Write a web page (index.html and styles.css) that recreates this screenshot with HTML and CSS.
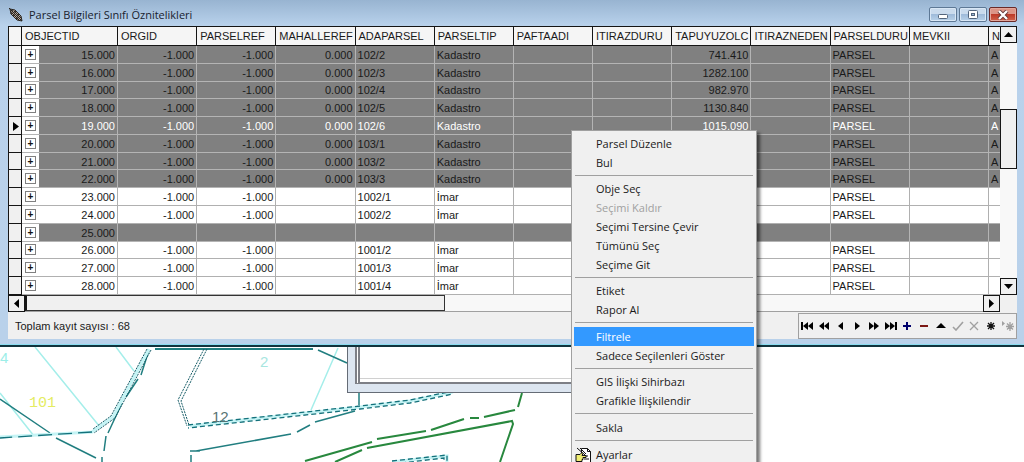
FILE: index.html
```html
<!DOCTYPE html>
<html lang="tr">
<head>
<meta charset="utf-8">
<title>Parsel Bilgileri Sınıfı Öznitelikleri</title>
<link rel="stylesheet" href="styles.css">
</head>
<body>
<main class="window">
  <header class="titlebar">
    <svg class="app-icon" width="16" height="16" viewBox="0 0 16 16" fill="none" stroke="#282420"><path d="M2 2l5 1 6 6 1 5-5-1-6-6z" fill="#b9a99a"/><path d="M1 1l13 13M5 3l-2 4M8 4L5 9M11 7l-3 5M4 6l7 7M6 4l7 7"/></svg>
    <h1>Parsel Bilgileri Sınıfı Öznitelikleri</h1>
    <div class="caption">
      <button class="cap" aria-label="Simge durumuna küçült"><svg width="12" height="10" viewBox="0 0 12 10"><rect x="1.500" y="4.500" width="9" height="4" rx="1" fill="#fff" stroke="#53657c"/></svg></button>
      <button class="cap" aria-label="Ekranı kapla"><svg width="12" height="10" viewBox="0 0 12 10"><rect x="1.500" y=".5" width="9" height="8" rx="1" fill="#fff" stroke="#53657c"/><rect x="4.500" y="3.500" width="3" height="2" fill="#9eb9d6" stroke="#53657c"/></svg></button>
      <button class="cap close" aria-label="Kapat"><svg width="12" height="10" viewBox="0 0 12 10"><path d="M2 1l8 8M10 1l-8 8" stroke="#5e3535" stroke-width="4"/><path d="M2 1l8 8M10 1l-8 8" stroke="#fff" stroke-width="2.400"/></svg></button>
    </div>
  </header>

  <div class="grid-area">
    <div class="table-view">
      <table>
        <colgroup><col class="c-mark"><col class="c-plus"><col class="c-id"><col><col><col><col><col><col><col><col><col><col><col><col class="c-last"></colgroup>
        <thead><tr><th></th><th colspan="2">OBJECTID</th><th>ORGID</th><th>PARSELREF</th><th>MAHALLEREF</th><th>ADAPARSEL</th><th>PARSELTIP</th><th>PAFTAADI</th><th>ITIRAZDURU</th><th>TAPUYUZOLC</th><th>ITIRAZNEDEN</th><th>PARSELDURU</th><th>MEVKII</th><th>N</th></tr></thead>
        <tbody>
          <tr class="sel"><th></th><td class="x"><button>+</button></td><td class="n">15.000</td><td class="n">-1.000</td><td class="n">-1.000</td><td class="n">0.000</td><td>102/2</td><td>Kadastro</td><td></td><td></td><td class="n">741.410</td><td></td><td>PARSEL</td><td></td><td>A</td></tr>
          <tr class="sel"><th></th><td class="x"><button>+</button></td><td class="n">16.000</td><td class="n">-1.000</td><td class="n">-1.000</td><td class="n">0.000</td><td>102/3</td><td>Kadastro</td><td></td><td></td><td class="n">1282.100</td><td></td><td>PARSEL</td><td></td><td>A</td></tr>
          <tr class="sel"><th></th><td class="x"><button>+</button></td><td class="n">17.000</td><td class="n">-1.000</td><td class="n">-1.000</td><td class="n">0.000</td><td>102/4</td><td>Kadastro</td><td></td><td></td><td class="n">982.970</td><td></td><td>PARSEL</td><td></td><td>A</td></tr>
          <tr class="sel"><th></th><td class="x"><button>+</button></td><td class="n">18.000</td><td class="n">-1.000</td><td class="n">-1.000</td><td class="n">0.000</td><td>102/5</td><td>Kadastro</td><td></td><td></td><td class="n">1130.840</td><td></td><td>PARSEL</td><td></td><td>A</td></tr>
          <tr class="sel current"><th><svg width="6" height="9" viewBox="0 0 6 9"><path d="M0 0l6 4.500-6 4.500z"/></svg></th><td class="x"><button>+</button></td><td class="n">19.000</td><td class="n">-1.000</td><td class="n">-1.000</td><td class="n">0.000</td><td>102/6</td><td>Kadastro</td><td></td><td></td><td class="n">1015.090</td><td></td><td>PARSEL</td><td></td><td>A</td></tr>
          <tr class="sel"><th></th><td class="x"><button>+</button></td><td class="n">20.000</td><td class="n">-1.000</td><td class="n">-1.000</td><td class="n">0.000</td><td>103/1</td><td>Kadastro</td><td></td><td></td><td></td><td></td><td>PARSEL</td><td></td><td>A</td></tr>
          <tr class="sel"><th></th><td class="x"><button>+</button></td><td class="n">21.000</td><td class="n">-1.000</td><td class="n">-1.000</td><td class="n">0.000</td><td>103/2</td><td>Kadastro</td><td></td><td></td><td></td><td></td><td>PARSEL</td><td></td><td>A</td></tr>
          <tr class="sel"><th></th><td class="x"><button>+</button></td><td class="n">22.000</td><td class="n">-1.000</td><td class="n">-1.000</td><td class="n">0.000</td><td>103/3</td><td>Kadastro</td><td></td><td></td><td></td><td></td><td>PARSEL</td><td></td><td>A</td></tr>
          <tr><th></th><td class="x"><button>+</button></td><td class="n">23.000</td><td class="n">-1.000</td><td class="n">-1.000</td><td></td><td>1002/1</td><td>İmar</td><td></td><td></td><td></td><td></td><td>PARSEL</td><td></td><td></td></tr>
          <tr><th></th><td class="x"><button>+</button></td><td class="n">24.000</td><td class="n">-1.000</td><td class="n">-1.000</td><td></td><td>1002/2</td><td>İmar</td><td></td><td></td><td></td><td></td><td>PARSEL</td><td></td><td></td></tr>
          <tr class="sel"><th></th><td class="x"><button>+</button></td><td class="n">25.000</td><td></td><td></td><td></td><td></td><td></td><td></td><td></td><td></td><td></td><td></td><td></td><td></td></tr>
          <tr><th></th><td class="x"><button>+</button></td><td class="n">26.000</td><td class="n">-1.000</td><td class="n">-1.000</td><td></td><td>1001/2</td><td>İmar</td><td></td><td></td><td></td><td></td><td>PARSEL</td><td></td><td></td></tr>
          <tr><th></th><td class="x"><button>+</button></td><td class="n">27.000</td><td class="n">-1.000</td><td class="n">-1.000</td><td></td><td>1001/3</td><td>İmar</td><td></td><td></td><td></td><td></td><td>PARSEL</td><td></td><td></td></tr>
          <tr><th></th><td class="x"><button>+</button></td><td class="n">28.000</td><td class="n">-1.000</td><td class="n">-1.000</td><td></td><td>1001/4</td><td>İmar</td><td></td><td></td><td></td><td></td><td>PARSEL</td><td></td><td></td></tr>
        </tbody>
      </table>
    </div>
    <div class="vscroll">
      <button class="arrow" aria-label="Yukarı"><svg width="9" height="5" viewBox="0 0 9 5"><path d="M0 5l4.500-5L9 5z"/></svg></button>
      <div class="vtrack-before"></div>
      <div class="vthumb"></div>
      <div class="vtrack-after"></div>
      <button class="arrow" aria-label="Aşağı"><svg width="9" height="5" viewBox="0 0 9 5"><path d="M0 0l4.500 5L9 0z"/></svg></button>
    </div>
    <div class="hscroll">
      <button class="arrow left" aria-label="Sola"><svg width="5" height="9" viewBox="0 0 5 9"><path d="M5 0L0 4.500 5 9z"/></svg></button>
      <div class="hthumb"></div>
      <div class="htrack"></div>
      <button class="arrow" aria-label="Sağa"><svg width="5" height="9" viewBox="0 0 5 9"><path d="M0 0l5 4.500L0 9z"/></svg></button>
    </div>
  </div>

  <footer class="status">
    <span>Toplam kayıt sayısı : 68</span>
    <div class="navigator">
      <button aria-label="İlk"><svg width="12" height="10" viewBox="0 0 12 10"><path d="M0 1h2v8H0zM7 1v8L2 5zM12 1v8L7 5z"/></svg></button>
      <button aria-label="Önceki sayfa"><svg width="12" height="10" viewBox="0 0 12 10"><path d="M6 1v8L1 5zM11 1v8L6 5z"/></svg></button>
      <button aria-label="Önceki"><svg width="12" height="10" viewBox="0 0 12 10"><path d="M8 1v8L3 5z"/></svg></button>
      <button aria-label="Sonraki"><svg width="12" height="10" viewBox="0 0 12 10"><path d="M4 1v8l5-4z"/></svg></button>
      <button aria-label="Sonraki sayfa"><svg width="12" height="10" viewBox="0 0 12 10"><path d="M1 1v8l5-4zM6 1v8l5-4z"/></svg></button>
      <button aria-label="Son"><svg width="12" height="10" viewBox="0 0 12 10"><path d="M0 1v8l5-4zM5 1v8l5-4zM10 1h2v8h-2z"/></svg></button>
      <button aria-label="Ekle"><svg width="12" height="10" viewBox="0 0 12 10"><path d="M6 1v8M2 5h8" stroke="#00006c" stroke-width="2"/></svg></button>
      <button aria-label="Sil"><svg width="12" height="10" viewBox="0 0 12 10"><path d="M2 5h8" stroke="#7b1713" stroke-width="2"/></svg></button>
      <button aria-label="Düzenle"><svg width="12" height="10" viewBox="0 0 12 10"><path d="M1 7l5-5 5 5z"/></svg></button>
      <button aria-label="Onayla" disabled><svg width="12" height="10" viewBox="0 0 12 10"><path d="M1 6l3 3 7-8" fill="none" stroke="#a0a0a0" stroke-width="1.600"/></svg></button>
      <button aria-label="İptal" disabled><svg width="12" height="10" viewBox="0 0 12 10"><path d="M2 1l8 8M10 1L2 9" fill="none" stroke="#a0a0a0" stroke-width="1.300"/></svg></button>
      <button aria-label="Yer imi"><svg width="12" height="10" viewBox="0 0 12 10"><path d="M6 1v8M2 5h8M3 2l6 6M9 2L3 8" stroke="#111" stroke-width="1.300"/></svg></button>
      <button aria-label="Yer imine git" disabled><svg width="12" height="10" viewBox="0 0 12 10"><path d="M0 0v5l3-2.500z" fill="#a0a0a0"/><path d="M8 1v9M4 5.500h8M5 2.500l6 6M11 2.500l-6 6" stroke="#a0a0a0" stroke-width="1.300"/></svg></button>
    </div>
  </footer>
</main>

<section class="map" aria-label="Harita">
  <svg width="1024" height="115" viewBox="0 347 1024 115" fill="none" stroke-width="1.500">
    <g stroke="#a5eeea">
      <path d="M0 393L34 436M35 347L100 427M116 347l18 24M338 348l-27 62"/>
    </g>
    <g stroke="#217e80">
      <path d="M0 399l50 34M56 438l40 20M318 350l29 13" />
      <path d="M149 350l-8 25M138 379l-12 18M122 403l-14 30M106 436l-2 15M102 457v5"/>
      <path d="M196 451l95-17M297 432l13-7M315 422l40-11M359 393v12M191 462v-7M190 451h10"/>
      <path d="M155 349h158" stroke-width="2"/>
    </g>
    <g stroke="#c4f4f5" stroke-width="3">
      <path d="M149 349l-36 68-21 15-92 5M190 426l170-19 50-6 43-9M392 462l55-6v6"/>
    </g>
    <g stroke="#145b66" stroke-width="1">
      <path stroke-dasharray="2 1" d="M147 349l-36 67-18 13M151 350l-36 68-21 15M204 349l-26 51 9 26M207 349l-26 52 8 24"/>
    </g>
    <g stroke="#14717b" stroke-width="1.300">
      <path stroke-dasharray="14 6" d="M92 432l-92 6"/>
      <path stroke-dasharray="5 3" d="M188 425l172-19 50-6 43-9"/>
      <path stroke-dasharray="5 3" stroke-dashoffset="4" d="M188 428l172-19 50-6 43-9"/>
      <path stroke-dasharray="5 3" d="M392 461l55-6v7M393 464l51-6v4"/>
    </g>
    <g stroke="#28883e" stroke-width="2">
      <path d="M305 461l67-19M377 439l49-8M431 430l33-11M470 418h9M484 417l31-7M518 407l4-14M335 462l27-12M367 448l145-27 1 3-13 38"/>
    </g>
    <g class="map-text">
      <text x="0" y="363" fill="#9ceee8">4</text>
      <text x="260" y="367" fill="#a8e6df">2</text>
      <text class="parcel" x="29" y="407" fill="#e4ec62">101</text>
      <text x="212" y="422" fill="#587373">12</text>
    </g>
  </svg>
  <div class="back-window"><div></div></div>
</section>

<div class="menu" role="menu">
  <button role="menuitem">Parsel Düzenle</button>
  <button role="menuitem">Bul</button>
  <hr>
  <button role="menuitem">Obje Seç</button>
  <button role="menuitem" disabled>Seçimi Kaldır</button>
  <button role="menuitem">Seçimi Tersine Çevir</button>
  <button role="menuitem">Tümünü Seç</button>
  <button role="menuitem">Seçime Git</button>
  <hr>
  <button role="menuitem">Etiket</button>
  <button role="menuitem">Rapor Al</button>
  <hr class="wide">
  <button role="menuitem" class="active">Filtrele</button>
  <button role="menuitem">Sadece Seçilenleri Göster</button>
  <hr>
  <button role="menuitem">GIS İlişki Sihirbazı</button>
  <button role="menuitem">Grafikle İlişkilendir</button>
  <hr class="wide">
  <button role="menuitem">Sakla</button>
  <hr class="wide">
  <button role="menuitem" class="with-icon"><svg width="16" height="16" viewBox="0 0 16 16" fill="none" stroke="#111"><path d="M6.500 1.500h6l3 3v11h-9z" fill="#fff"/><path d="M12.500 1.500v3h3M9 9h4M9 12h5M2 1l8 7M5 1l6 6"/><path d="M1 7.500h4l2-2 1 1-1 2h4v2H8v2H7v2H1z" fill="#efed72"/></svg>Ayarlar</button>
</div>
</body>
</html>
```
FILE: styles.css
```css
* { box-sizing: border-box; }
html, body { height: 100%; }
body {
  margin: 0;
  display: flex;
  flex-direction: column;
  overflow: hidden;
  background: #fff;
  color: #1a1a1a;
  font: 11px/16px "Liberation Sans", Arial, sans-serif;
}
button {
  padding: 0;
  border: 0;
  background: none;
  color: inherit;
  font: inherit;
}
svg { display: block; flex: none; }

.window {
  flex: none;
  padding: 0 7px 6px 8px;
  background: linear-gradient(#98b4d1, #b9d2ec 26px, #b9d1ea);
  border-bottom: 2px solid #10333d;
  box-shadow: inset 0 -1px #8bdcf0;
}
.titlebar {
  display: flex;
  align-items: center;
  height: 26px;
  padding-top: 3px;
}
.titlebar h1 {
  flex: 1;
  margin: 0 0 0 5px;
  color: #18222e;
  font: 11px/16px "Open Sans", "Noto Sans", sans-serif;
}
.caption { display: flex; gap: 2px; }
.cap {
  display: grid;
  place-items: center;
  width: 28px;
  height: 15px;
  border: 1px solid #5d7895;
  border-radius: 2px;
  background: linear-gradient(#cadbed 45%, #9fbbda 50%, #b9d2ea);
  box-shadow: inset 0 0 0 1px #d9e7f5;
}
.close {
  border-color: #6a2a28;
  background: linear-gradient(#dc9587 45%, #bd3a28 50%, #d0644c);
  box-shadow: inset 0 0 0 1px #e3a79c;
}

.grid-area {
  display: grid;
  grid-template-columns: 1fr 17px;
  grid-template-rows: 269px 17px;
  background: #f0f0f0;
}
.table-view { overflow: hidden; border-top: 1px solid #151515; border-left: 1px solid #151515; background: #fff; }
table { width: 100%; height: 268px; table-layout: fixed; border-collapse: separate; border-spacing: 0; }
col { width: 8%; }
.c-mark { width: 13px; }
.c-plus { width: 17px; }
.c-id { width: 79px; }
.c-last { width: 11px; }
th, td {
  padding: 1px 2px 0;
  overflow: hidden;
  text-align: left;
  font-weight: 400;
  line-height: 14px;
  white-space: nowrap;
}
thead th {
  height: 19px;
  padding: 0 0 0 3px;
  background: #f5f5f5;
  border-right: 1px solid #151515;
  border-bottom: 1px solid #151515;
}
thead th:last-child { border-right: 0; }
tbody th { background: #f0f0f0; border-right: 1px solid #151515; border-bottom: 1px solid #151515; }
tbody th svg { margin-left: 2px; }
td { border-right: 1px solid #b0b0b0; border-bottom: 1px solid #b0b0b0; }
td:last-child { border-right: 0; padding-right: 0; }
.sel td { background: #808080; border-color: #b4b4b4; }
.current td { color: #fff; }
.n { text-align: right; }
.x, .sel .x { padding: 0; background: #fff; border-right: 0; color: #111; }
.x button {
  display: grid;
  place-items: center;
  width: 11px;
  height: 11px;
  margin-left: 3px;
  border: 1px solid #808080;
  font: bold 10px/9px "Liberation Sans", sans-serif;
}

.arrow {
  display: grid;
  place-items: center;
  flex: none;
  width: 17px;
  height: 17px;
  border: 1px solid #151515;
  background: #f0f0f0;
}
.vscroll { display: flex; flex-direction: column; background: #f8f8f8; }
.vtrack-before { flex: 67; }
.vthumb { flex: 58; border: 1px solid #151515; background: #f0f0f0; }
.vtrack-after { flex: 110; }
.hscroll { display: flex; background: #f8f8f8; border-bottom: 1px solid #a0a0a0; }
.hthumb { flex: 419; border: 1px solid #333; border-left: 2px solid #151515; background: #f0f0f0; }
.htrack { flex: 540; }

.status {
  display: flex;
  align-items: center;
  justify-content: space-between;
  height: 27px;
  padding: 1px 0 0 7px;
  background: #f0f0f0;
}
.navigator {
  display: grid;
  grid-template-columns: repeat(13, 1fr);
  width: 219px;
  height: 26px;
  border: 1px solid #a0a0a0;
}
.navigator button { display: grid; place-items: center; }

.map { position: relative; flex: 1; overflow: hidden; }
.map-text { font: 15px "Liberation Sans", sans-serif; stroke: none; }
.parcel { font-family: "Liberation Mono", monospace; }
.back-window {
  position: absolute;
  top: 0;
  left: 347px;
  width: 360px;
  height: 46px;
  padding: 0 7px 8px;
  background: #dce5f0;
  border: 1px solid #656c76;
  border-top: 0;
}
.back-window div {
  height: 100%;
  background: #fff;
  border: solid #7d7f86;
  border-width: 0 0 2px 5px;
  border-left-style: double;
  box-shadow: inset 0 -3px #fff, inset 0 -4px #d0d0d0;
}

.menu {
  position: absolute;
  top: 130px;
  left: 571px;
  width: 186px;
  padding: 3px 2px;
  background: #f0f0f0;
  border: 1px solid #a0a0a0;
  box-shadow: 3px 3px 3px #0008;
  font: 11px/19px "Open Sans", "Noto Sans", sans-serif;
}
.menu button {
  display: flex;
  align-items: center;
  width: 100%;
  height: 19px;
  padding-left: 22px;
  white-space: nowrap;
}
.menu button:disabled { color: #a0a0a0; }
.menu .active { background: #3399ff; color: #fff; }
.menu .with-icon { gap: 5px; padding-left: 1px; }
.menu hr {
  height: 1px;
  margin: 3px 1px;
  border: 0;
  background: #a0a0a0;
}
.menu .wide { margin-bottom: 4px; }
```
